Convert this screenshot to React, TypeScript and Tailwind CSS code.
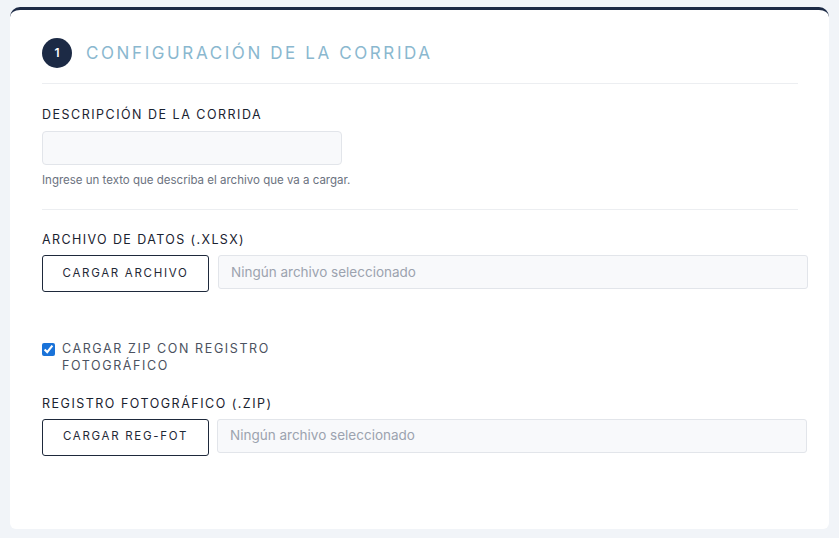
const font = { fontFamily: "Inter, 'Liberation Sans', sans-serif" };

function FileField({ button, gap }: { button: string; gap: string }) {
  return (
    <div className={`mt-[5px] flex items-start ${gap}`}>
      <button className="h-[37px] w-[167px] shrink-0 rounded-[3px] border border-[#1e293b] bg-white text-[11.5px] tracking-[1.7px] text-[#1f2937]">
        {button}
      </button>
      <div className="flex h-[34px] w-[590px] shrink-0 items-center rounded-[3px] border border-[#e2e5ea] bg-[#f8f9fb] px-3 text-[13.5px] text-[#9ca3af]">
        Ningún archivo seleccionado
      </div>
    </div>
  );
}

export default function App() {
  return (
    <div className="min-h-[538px] w-[839px] bg-[#f1f4f8] px-[10px] pt-[7px] pb-[9px]" style={font}>
      <div className="h-[522px] rounded-t-[10px] rounded-b-[6px] border-t-[3px] border-[#1c2a45] bg-white px-8 pt-[28px]">
        <div className="flex items-center gap-[14px]">
          <div className="flex h-[30px] w-[30px] items-center justify-center rounded-full bg-[#1c2a45] text-[12px] font-semibold text-white">
            1
          </div>
          <h2 className="pt-[2px] text-[17px] tracking-[2.6px] text-[#8ab8cf]">
            CONFIGURACIÓN DE LA CORRIDA
          </h2>
        </div>
        <div className="mt-[15px] h-px w-[756px] bg-[#eceef1]" />

        <div className="mt-[22px] text-[12.5px] tracking-[1.5px] text-[#1a2230]">
          DESCRIPCIÓN DE LA CORRIDA
        </div>
        <input className="mt-[6px] block h-[34px] w-[300px] rounded-[4px] border border-[#e2e5ea] bg-[#f8f9fb] outline-none" />
        <div className="mt-[7px] text-[11.5px] text-[#6b7280]">
          Ingrese un texto que describa el archivo que va a cargar.
        </div>
        <div className="mt-[20px] h-px w-[756px] bg-[#eceef1]" />

        <div className="mt-[21px] text-[12.5px] tracking-[1.4px] text-[#1a2230]">
          ARCHIVO DE DATOS (.XLSX)
        </div>
        <FileField button="CARGAR ARCHIVO" gap="gap-[9px]" />

        <label className="mt-[48px] flex items-start gap-[7px]">
          <input type="checkbox" defaultChecked className="mt-[3px] h-[13px] w-[13px] accent-[#1a73d9]" />
          <span className="w-[230px] text-[12.5px] leading-[17px] tracking-[1.6px] text-[#4b5260]">
            CARGAR ZIP CON REGISTRO FOTOGRÁFICO
          </span>
        </label>

        <div className="mt-[21px] text-[12.5px] tracking-[1.5px] text-[#1a2230]">
          REGISTRO FOTOGRÁFICO (.ZIP)
        </div>
        <FileField button="CARGAR REG-FOT" gap="gap-[8px]" />
      </div>
    </div>
  );
}
